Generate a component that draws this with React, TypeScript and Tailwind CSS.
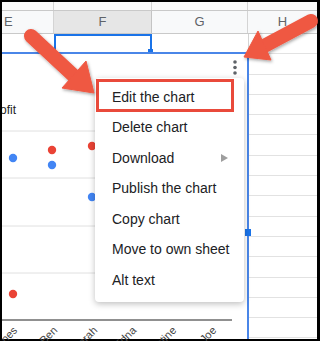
const items = ['Edit the chart', 'Delete chart', 'Download', 'Publish the chart', 'Copy chart', 'Move to own sheet', 'Alt text']

const dots = [
  { x: 11, y: 104, c: '#4285f4' },
  { x: 50, y: 96, c: '#ea4335' },
  { x: 50, y: 111, c: '#4285f4' },
  { x: 90, y: 92, c: '#ea4335' },
  { x: 90, y: 143, c: '#4285f4' },
  { x: 11, y: 240, c: '#ea4335' },
]

const names = [
  { n: 'Jones', x: 16 },
  { n: 'Ben', x: 56 },
  { n: 'Sarah', x: 96 },
  { n: 'Edna', x: 135 },
  { n: 'Justine', x: 175 },
  { n: 'Joe', x: 215 },
]

function Chart() {
  return (
    <svg className="absolute inset-0" width="246" height="290" viewBox="0 0 246 290">
      {[77, 124, 172, 219].map(y => (
        <line key={y} x1="0" x2="230" y1={y} y2={y} stroke="#e0e0e0" strokeWidth="1" />
      ))}
      <line x1="0" x2="230" y1="266" y2="266" stroke="#6b6b6b" strokeWidth="1.5" />
      <text x="14" y="60" textAnchor="end" fontSize="12" fill="#222" fontFamily="'Liberation Sans', Arial, sans-serif">Profit</text>
      {dots.map((d, i) => (
        <circle key={i} cx={d.x} cy={d.y} r="4.2" fill={d.c} />
      ))}
      {names.map(l => (
        <text key={l.n} x={l.x} y="277" textAnchor="end" fontSize="11" fill="#444"
          fontFamily="'Liberation Sans', Arial, sans-serif" transform={`rotate(-45 ${l.x} 277)`}>
          {l.n}
        </text>
      ))}
    </svg>
  )
}

function Arrows() {
  return (
    <svg className="absolute inset-0 pointer-events-none" width="320" height="341" viewBox="0 0 320 341">
      <defs>
        <filter id="sh" x="-20%" y="-20%" width="140%" height="140%">
          <feDropShadow dx="1" dy="1.5" stdDeviation="1.5" floodColor="#000" floodOpacity="0.35" />
        </filter>
      </defs>
      <g fill="#ef5843" stroke="#ef5843" filter="url(#sh)">
        <line x1="31" y1="36" x2="74" y2="76" strokeWidth="14" strokeLinecap="round" />
        <polygon points="94,93 86,61 62,88" strokeWidth="1" strokeLinejoin="round" />
        <line x1="311" y1="21" x2="266" y2="45" strokeWidth="14" strokeLinecap="round" />
        <polygon points="244,57 258,31 271,60" strokeWidth="1" strokeLinejoin="round" />
      </g>
    </svg>
  )
}

export default function App() {
  return (
    <div className="relative w-[320px] h-[341px] overflow-hidden bg-black pt-[2px] pl-[2px] pr-[3px] pb-[2px] font-['Liberation_Sans',Arial,sans-serif]">
      <div className="flex flex-col h-full bg-white">
        <div className="flex h-[8px] shrink-0 bg-[#fafafa]">
          <div className="w-[52px] border-r border-[#d4d4d4]" />
          <div className="w-[98px] border-r border-[#d4d4d4]" />
          <div className="w-[96px] border-r border-[#d4d4d4]" />
          <div className="flex-1" />
        </div>
        <div className="flex h-[24px] shrink-0 border-y border-[#c9c9c9] text-[13px] text-[#5f6368]">
          <div className="w-[52px] pl-[2px] flex items-center bg-[#f8f9fa] border-r border-[#d4d4d4]">E</div>
          <div className="w-[98px] flex items-center justify-center bg-[#e6e6e6] border-r border-[#c4c4c4]">F</div>
          <div className="w-[96px] flex items-center justify-center bg-[#f8f9fa] border-r border-[#d4d4d4]">G</div>
          <div className="flex-1 flex items-center justify-center bg-[#f8f9fa]">H</div>
        </div>
        <div className="flex flex-1">
          <div className="w-[247px] flex flex-col">
            <div className="flex h-[18px] shrink-0">
              <div className="w-[52px]" />
              <div className="relative w-[98px] border-2 border-b-0 border-[#1a73e8]">
                <div className="absolute -right-[3px] -bottom-[2px] w-[5px] h-[5px] bg-[#1a73e8]" />
              </div>
              <div className="flex-1 border-r border-[#d4d4d4]" />
            </div>
            <div className="relative flex-1 bg-white border-t-2 border-r-2 border-[#4a86e8]">
              <Chart />
              <div className="absolute -right-[4px] top-[175px] w-[6px] h-[7px] bg-[#1a73e8]" />
            </div>
          </div>
          <div className="flex-1 flex flex-col">
            {Array.from({ length: 15 }).map((_, i) => (
              <div key={i} className="h-[20.3px] shrink-0 border-b border-[#e2e2e2]" />
            ))}
          </div>
        </div>
      </div>

      <svg className="absolute left-[232px] top-[59px]" width="6" height="17" viewBox="0 0 6 17">
        <circle cx="3" cy="3" r="1.8" fill="#5f6368" />
        <circle cx="3" cy="8.5" r="1.8" fill="#5f6368" />
        <circle cx="3" cy="14" r="1.8" fill="#5f6368" />
      </svg>

      <div className="absolute left-[95px] top-[78px] w-[149px] pt-[4px] pb-[6px] bg-white rounded-[4px] shadow-[0_2px_6px_rgba(0,0,0,0.25)]">
        {items.map(item => (
          <div key={item} className="h-[30.5px] flex items-center pl-[17px] pr-[17px] text-[14px] text-[#202124] whitespace-nowrap">
            <span className="flex-1">{item}</span>
            {item === 'Download' && (
              <svg width="7" height="8" viewBox="0 0 7 8" className="-mr-[1px]">
                <polygon points="0,0 7,4 0,8" fill="#9e9e9e" />
              </svg>
            )}
          </div>
        ))}
      </div>

      <div className="absolute left-[96px] top-[79px] w-[138px] h-[33px] border-[3px] border-[#e94a3b]" />

      <Arrows />
    </div>
  )
}
